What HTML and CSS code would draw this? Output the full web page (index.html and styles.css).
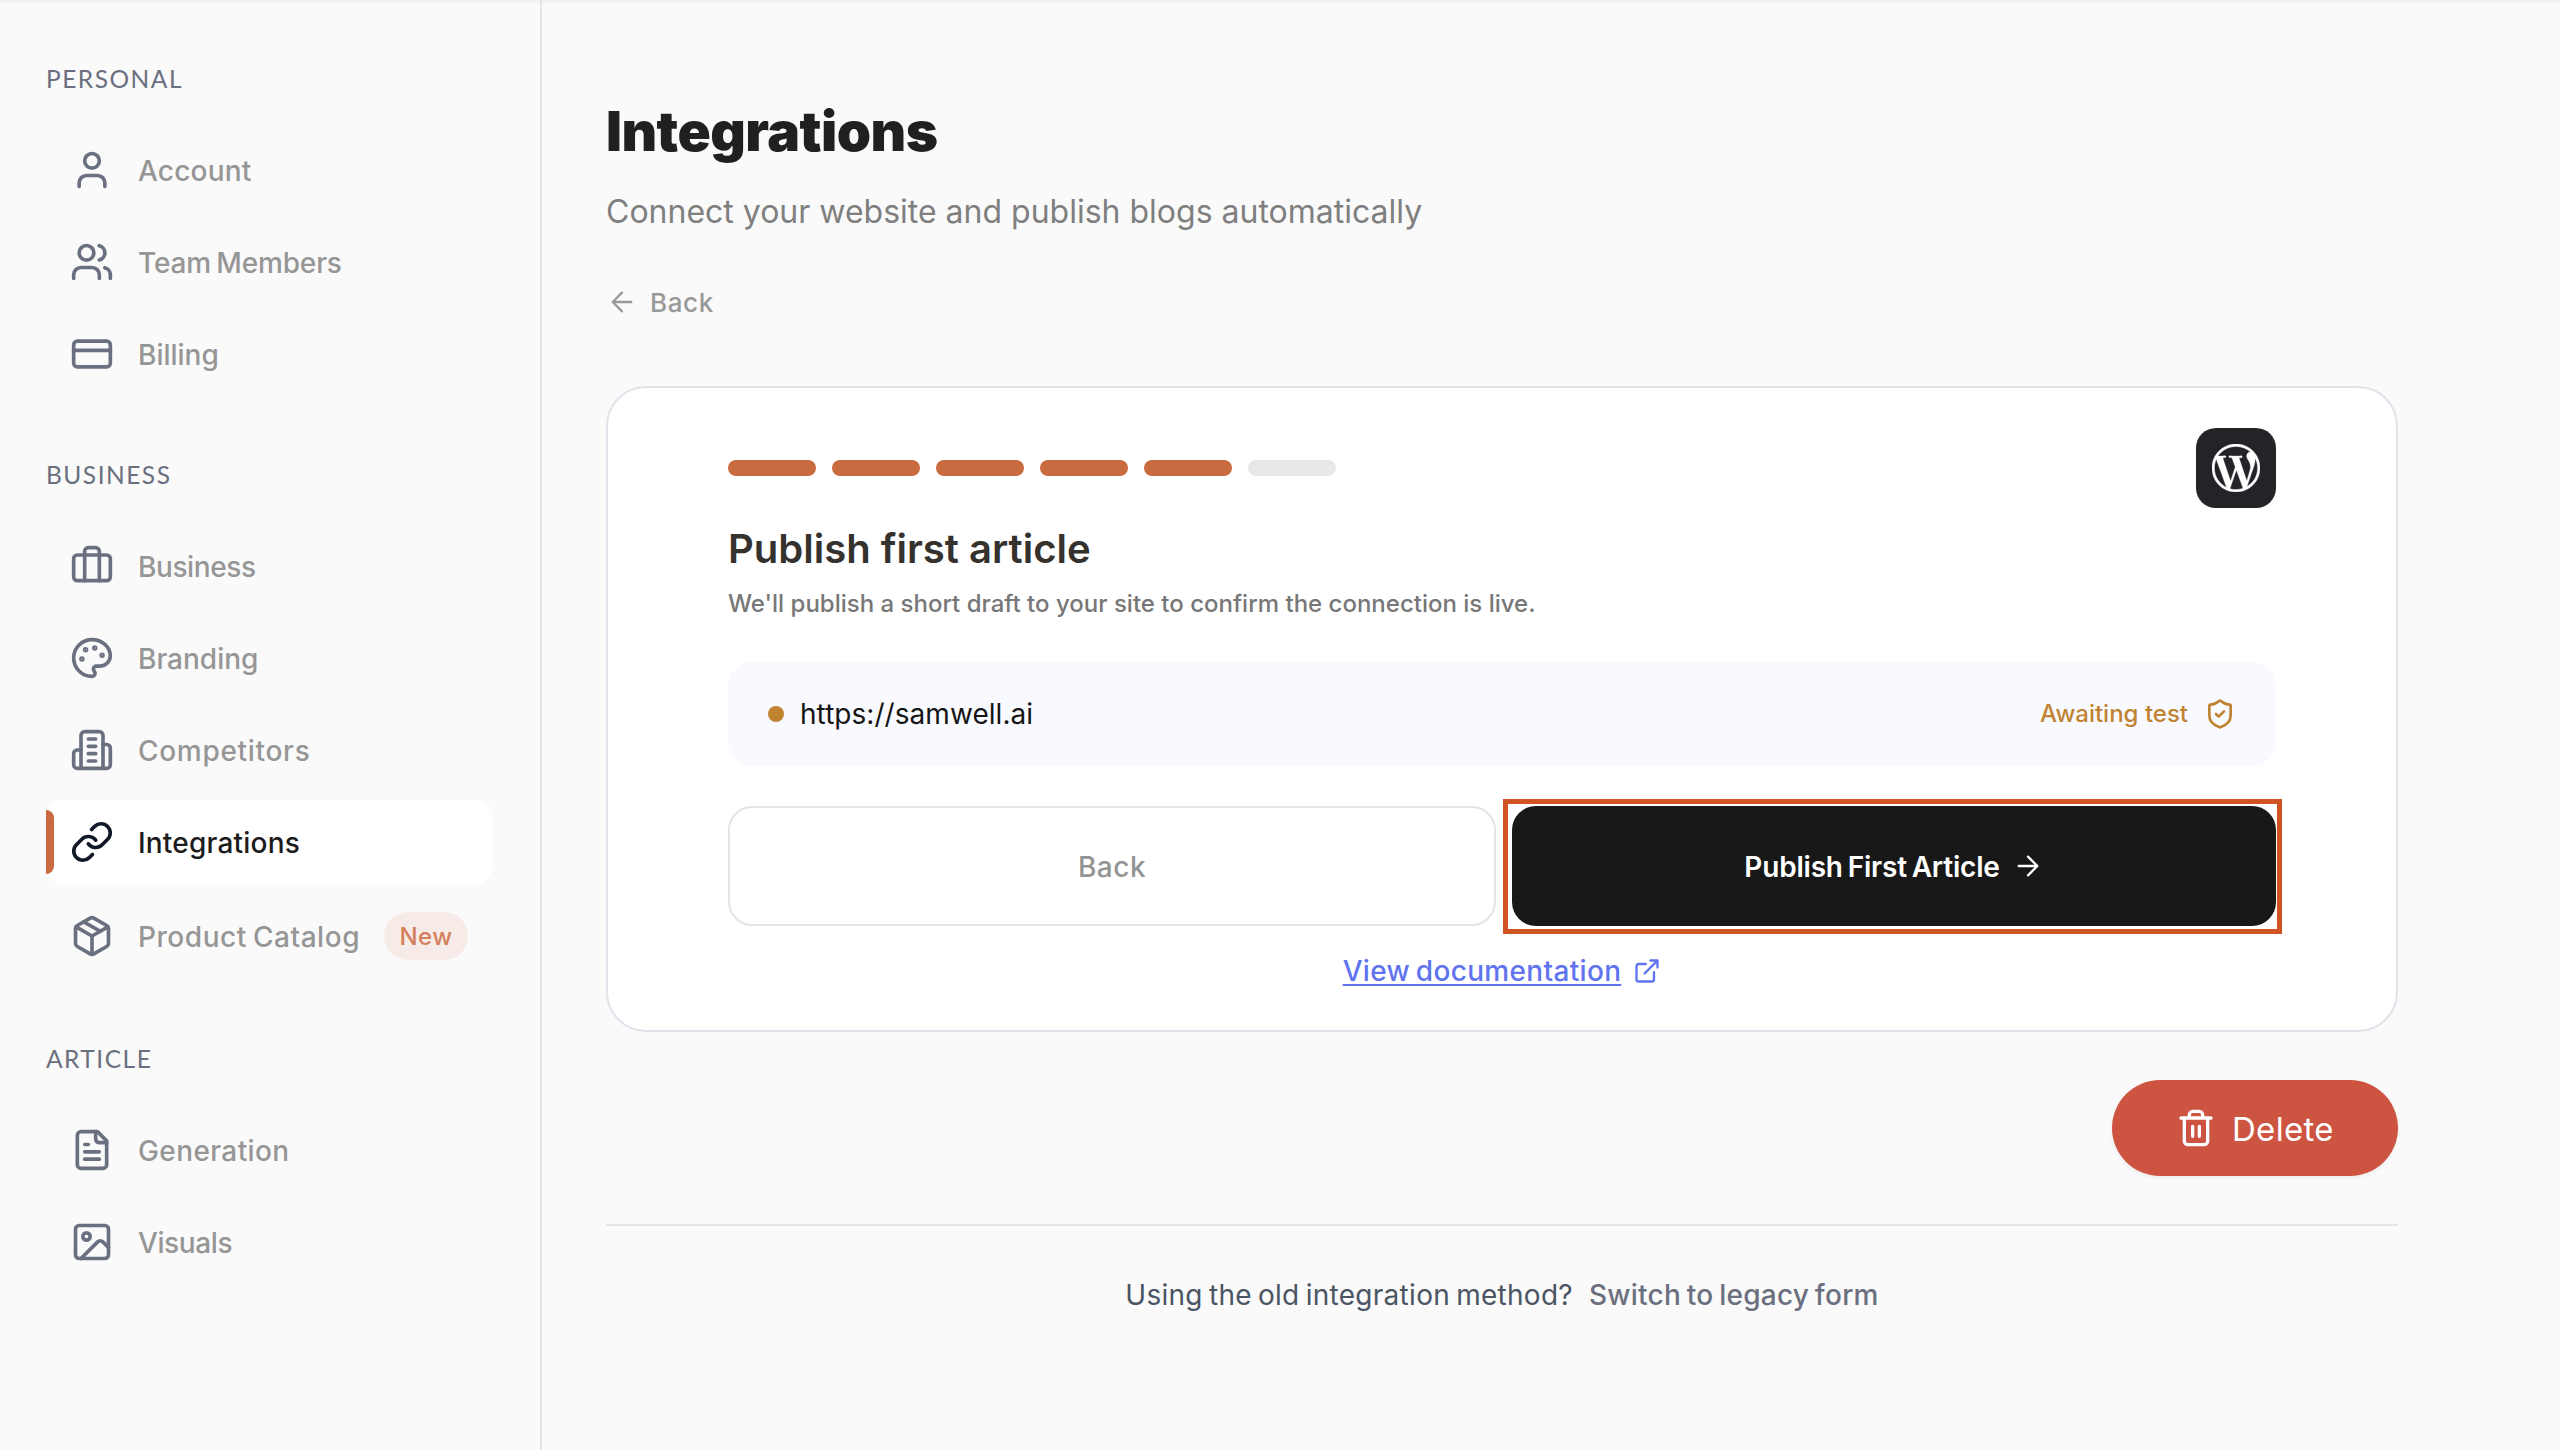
FILE: index.html
```
<!DOCTYPE html>
<html lang="en">
<head>
<meta charset="utf-8">
<title>Integrations</title>
<link rel="stylesheet" href="styles.css">
</head>
<body>
<div class="app">
  <aside class="sidebar">
    <nav class="nav-group">
      <h2 class="nav-heading">PERSONAL</h2>
      <a class="nav-item"><svg class="icon" viewBox="0 0 24 24"><path d="M19 21v-2a4 4 0 0 0-4-4H9a4 4 0 0 0-4 4v2"/><circle cx="12" cy="7" r="4"/></svg><span class="label">Account</span></a>
      <a class="nav-item team"><svg class="icon" viewBox="0 0 24 24"><path d="M16 21v-2a4 4 0 0 0-4-4H6a4 4 0 0 0-4 4v2"/><circle cx="9" cy="7" r="4"/><path d="M22 21v-2a4 4 0 0 0-3-3.87"/><path d="M16 3.13a4 4 0 0 1 0 7.75"/></svg><span class="label">Team Members</span></a>
      <a class="nav-item snug"><svg class="icon" viewBox="0 0 24 24"><rect x="2" y="5" width="20" height="14" rx="2"/><path d="M2 10h20"/></svg><span class="label">Billing</span></a>
    </nav>
    <nav class="nav-group">
      <h2 class="nav-heading">BUSINESS</h2>
      <a class="nav-item tight"><svg class="icon" viewBox="0 0 24 24"><path d="M16 20V4a2 2 0 0 0-2-2h-4a2 2 0 0 0-2 2v16"/><rect x="2" y="6" width="20" height="14" rx="2"/></svg><span class="label">Business</span></a>
      <a class="nav-item snug"><svg class="icon" viewBox="0 0 24 24"><g fill="currentColor"><circle cx="13.5" cy="6.5" r=".5"/><circle cx="17.5" cy="10.5" r=".5"/><circle cx="8.5" cy="7.5" r=".5"/><circle cx="6.5" cy="12.5" r=".5"/></g><path d="M12 2C6.5 2 2 6.5 2 12s4.5 10 10 10c.926 0 1.648-.746 1.648-1.688 0-.437-.18-.835-.437-1.125-.29-.289-.438-.652-.438-1.125a1.64 1.64 0 0 1 1.668-1.668h1.996c3.051 0 5.555-2.503 5.555-5.554C21.965 6.012 17.461 2 12 2z"/></svg><span class="label">Branding</span></a>
      <a class="nav-item competitors"><svg class="icon" viewBox="0 0 24 24"><path d="M6 22V4a2 2 0 0 1 2-2h8a2 2 0 0 1 2 2v18Z"/><path d="M6 12H4a2 2 0 0 0-2 2v6a2 2 0 0 0 2 2h2"/><path d="M18 9h2a2 2 0 0 1 2 2v9a2 2 0 0 1-2 2h-2"/><path d="M10 6h4M10 10h4M10 14h4M10 18h4"/></svg><span class="label">Competitors</span></a>
      <a class="nav-item active"><svg class="icon" viewBox="0 0 24 24"><path d="M10 13a5 5 0 0 0 7.54.54l3-3a5 5 0 0 0-7.07-7.07l-1.72 1.71"/><path d="M14 11a5 5 0 0 0-7.54-.54l-3 3a5 5 0 0 0 7.07 7.07l1.71-1.71"/></svg><span class="label">Integrations</span></a>
      <a class="nav-item catalog"><svg class="icon" viewBox="0 0 24 24"><path d="m7.5 4.27 9 5.15"/><path d="M21 8a2 2 0 0 0-1-1.73l-7-4a2 2 0 0 0-2 0l-7 4A2 2 0 0 0 3 8v8a2 2 0 0 0 1 1.73l7 4a2 2 0 0 0 2 0l7-4A2 2 0 0 0 21 16Z"/><path d="m3.3 7 8.7 5 8.7-5"/><path d="M12 22V12"/></svg><span class="label">Product Catalog</span><b class="badge">New</b></a>
    </nav>
    <nav class="nav-group">
      <h2 class="nav-heading">ARTICLE</h2>
      <a class="nav-item loose"><svg class="icon" viewBox="0 0 24 24"><path d="M15 2H6a2 2 0 0 0-2 2v16a2 2 0 0 0 2 2h12a2 2 0 0 0 2-2V7Z"/><path d="M14 2v4a2 2 0 0 0 2 2h4"/><path d="M10 9H8M16 13H8M16 17H8"/></svg><span class="label">Generation</span></a>
      <a class="nav-item tight"><svg class="icon" viewBox="0 0 24 24"><rect x="3" y="3" width="18" height="18" rx="2"/><circle cx="9" cy="9" r="2"/><path d="m21 15-3.086-3.086a2 2 0 0 0-2.828 0L6 21"/></svg><span class="label">Visuals</span></a>
    </nav>
  </aside>

  <main class="main">
    <h1 class="title">Integrations</h1>
    <p class="subtitle">Connect your website and publish blogs automatically</p>
    <a class="back-link"><svg class="icon arrow" viewBox="0 0 24 24"><path d="m12 19-7-7 7-7M19 12H5"/></svg>Back</a>

    <section class="card">
      <div class="card-top">
        <div class="steps">
          <i class="step done"></i><i class="step done"></i><i class="step done"></i><i class="step done"></i><i class="step done"></i><i class="step"></i>
        </div>
        <div class="platform">
          <svg class="wp" viewBox="0 0 24 24"><path fill-rule="evenodd" d="M21.469 6.825c.84 1.537 1.318 3.3 1.318 5.175 0 3.979-2.156 7.456-5.363 9.325l3.295-9.527c.615-1.54.82-2.771.82-3.864 0-.405-.026-.78-.07-1.11m-7.981.105c.647-.03 1.232-.105 1.232-.105.582-.075.514-.93-.067-.899 0 0-1.755.135-2.88.135-1.064 0-2.85-.15-2.85-.15-.585-.03-.661.855-.075.885 0 0 .54.061 1.125.09l1.68 4.605-2.37 7.08L5.354 6.9c.649-.03 1.234-.1 1.234-.1.585-.075.516-.93-.065-.896 0 0-1.746.138-2.874.138-.2 0-.438-.008-.69-.015C4.911 3.15 8.235 1.215 12 1.215c2.809 0 5.365 1.072 7.286 2.833-.046-.003-.091-.009-.141-.009-1.06 0-1.812.923-1.812 1.914 0 .89.513 1.643 1.06 2.531.411.72.89 1.643.89 2.977 0 .915-.354 1.994-.821 3.479l-1.075 3.585-3.9-11.61.001.014zM12 22.784c-1.059 0-2.081-.153-3.048-.437l3.237-9.406 3.315 9.087c.024.053.05.101.078.149-1.12.393-2.325.609-3.582.609M1.211 12c0-1.564.336-3.05.935-4.39L7.29 21.709C3.694 19.96 1.212 16.271 1.211 12M12 0C5.385 0 0 5.385 0 12s5.385 12 12 12 12-5.385 12-12S18.615 0 12 0"/></svg>
        </div>
      </div>
      <h2 class="card-title">Publish first article</h2>
      <p class="card-text">We'll publish a short draft to your site to confirm the connection is live.</p>
      <div class="site">
        <i class="dot"></i>
        <span class="site-url">https://samwell.ai</span>
        <span class="site-status">Awaiting test<svg class="icon shield" viewBox="0 0 24 24"><path d="M20 13c0 5-3.5 7.5-7.66 8.95a1 1 0 0 1-.67-.01C7.5 20.5 4 18 4 13V6a1 1 0 0 1 1-1c2 0 4.5-1.2 6.24-2.72a1.17 1.17 0 0 1 1.52 0C14.51 3.81 17 5 19 5a1 1 0 0 1 1 1z"/><path d="m9 12 2 2 4-4"/></svg></span>
      </div>
      <div class="actions">
        <button class="btn btn-back"><span class="label">Back</span></button>
        <button class="btn btn-publish"><span class="label">Publish First Article</span><svg class="icon arrow" viewBox="0 0 24 24"><path d="M5 12h14M12 5l7 7-7 7"/></svg></button>
        <i class="highlight"></i>
      </div>
      <a class="docs"><span class="docs-text">View documentation</span><svg class="icon external" viewBox="0 0 24 24"><path d="M18 13v6a2 2 0 0 1-2 2H5a2 2 0 0 1-2-2V8a2 2 0 0 1 2-2h6M15 3h6v6M10 14 21 3"/></svg></a>
    </section>

    <button class="delete"><svg class="icon trash" viewBox="0 0 24 24"><path d="M3 6h18M19 6v14c0 1-1 2-2 2H7c-1 0-2-1-2-2V6M8 6V4c0-1 1-2 2-2h4c1 0 2 1 2 2v2M10 11v6M14 11v6"/></svg><span class="label">Delete</span></button>

    <footer class="footer">
      <span class="footer-text">Using the old integration method?</span>
      <a class="footer-link">Switch to legacy form</a>
    </footer>
  </main>
</div>
</body>
</html>
```
FILE: styles.css
```
* { box-sizing: border-box; }

body {
  margin: 0;
  background: #fafafa;
  font-family: Inter, "Liberation Sans", sans-serif;
  -webkit-font-smoothing: antialiased;
}

h1, h2, p { margin: 0; }
button { border: 0; font: inherit; }

.app {
  display: flex;
  height: 1450px;
  overflow: hidden;
  background: linear-gradient(#eeeeee, #fafafa 5px);
}

.icon {
  width: 44px;
  height: 44px;
  flex: none;
  fill: none;
  stroke: currentColor;
  stroke-width: 2;
  stroke-linecap: round;
  stroke-linejoin: round;
}

.label { padding-top: 2px; }

/* Sidebar */
.sidebar {
  flex: none;
  width: 542px;
  padding: 63px 48px 0 46px;
  border-right: 2px solid #e4e5ec;
  display: flex;
  flex-direction: column;
  gap: 64px;
}

.nav-group {
  display: flex;
  flex-direction: column;
  gap: 8px;
}

.nav-group:last-child { gap: 8px; }

.nav-heading {
  height: 32px;
  margin-bottom: 25px;
  font: 400 24.5px/32px Lato, "Liberation Sans", sans-serif;
  letter-spacing: 1.5px;
  color: #6b7080;
}

.nav-group + .nav-group { margin-top: -1px; }

.nav-item {
  display: flex;
  align-items: center;
  gap: 24px;
  min-height: 84px;
  padding: 20px 24px;
  border-radius: 16px;
  font-size: 28px;
  font-weight: 500;
  line-height: 40px;
  letter-spacing: .2px;
  white-space: nowrap;
  color: #969696;
}

.nav-item .icon { color: #6b7080; }
.nav-item.snug { letter-spacing: 0; }
.nav-item.loose { letter-spacing: .4px; }
.nav-item.tight { letter-spacing: -.4px; }
.nav-item.team { letter-spacing: -.15px; word-spacing: -2px; }
.nav-item.competitors { letter-spacing: .7px; }
.nav-item.catalog { letter-spacing: .55px; word-spacing: -2px; }

.nav-item.active {
  position: relative;
  background: #ffffff;
  color: #1c1c1c;
}

.nav-item.active::before {
  content: "";
  position: absolute;
  left: 0;
  top: 10px;
  width: 8px;
  height: 64px;
  border-radius: 0 8px 8px 0;
  background: #c96b41;
}

.nav-item.active .icon { color: #111827; }

.badge {
  width: 84px;
  height: 48px;
  padding-top: 1px;
  border-radius: 24px;
  background: #f6ebe7;
  color: #d37f5c;
  font-size: 24px;
  font-weight: 500;
  line-height: 48px;
  letter-spacing: .4px;
  text-align: center;
}

.catalog { height: 88px; }

/* Main column */
.main {
  width: 1920px;
  padding: 99px 64px 0;
  display: flex;
  flex-direction: column;
}

.title {
  font-size: 55px;
  font-weight: 900;
  line-height: 64px;
  letter-spacing: -.55px;
  color: #221f20;
}

.subtitle {
  margin-top: 29px;
  font-size: 32px;
  line-height: 40px;
  color: #7f7f7f;
}

.back-link {
  display: flex;
  align-items: center;
  gap: 12px;
  height: 32px;
  margin-top: 54px;
  font-size: 26px;
  font-weight: 500;
  letter-spacing: .6px;
  color: #999999;
}

.arrow {
  width: 32px;
  height: 32px;
  stroke-width: 1.7;
}

/* Setup card */
.card {
  height: 646px;
  margin-top: 68px;
  padding: 40px 120px;
  border: 2px solid #e1e3eb;
  border-radius: 40px;
  background: #ffffff;
}

.card-top {
  display: flex;
  align-items: center;
  justify-content: space-between;
}

.steps {
  display: flex;
  gap: 16px;
}

.step {
  width: 88px;
  height: 16px;
  border-radius: 8px;
  background: #e8e8e8;
}

.step.done { background: #c96b41; }

.platform {
  width: 80px;
  height: 80px;
  border-radius: 20px;
  background: #222428;
  display: grid;
  place-items: center;
}

.wp {
  width: 48px;
  height: 48px;
  fill: #ffffff;
  stroke: #ffffff;
  stroke-width: .2;
}

.card-title {
  margin-top: 17px;
  font-size: 40px;
  font-weight: 600;
  line-height: 48px;
  color: #35312d;
}

.card-text {
  margin-top: 13px;
  font-size: 24px;
  font-weight: 500;
  line-height: 36px;
  color: #777777;
}

.site {
  display: flex;
  align-items: center;
  gap: 16px;
  height: 104px;
  margin-top: 40px;
  padding: 0 40px;
  border-radius: 24px;
  background: #f9faff;
}

.dot {
  width: 16px;
  height: 16px;
  border-radius: 50%;
  background: #bf8331;
}

.site-url {
  font-size: 28px;
  letter-spacing: .05px;
  color: #151515;
}

.site-status {
  display: flex;
  align-items: center;
  gap: 16px;
  margin-left: auto;
  font-size: 24px;
  font-weight: 500;
  line-height: 30px;
  color: #bf8331;
}

.shield {
  width: 32px;
  height: 32px;
}

.actions {
  position: relative;
  display: flex;
  gap: 16px;
  margin-top: 40px;
}

.btn {
  display: flex;
  align-items: center;
  justify-content: center;
  gap: 12px;
  height: 120px;
  border-radius: 24px;
  font-size: 28px;
}

.btn-back {
  width: 768px;
  border: 2px solid #e4e4e4;
  background: #ffffff;
  font-weight: 500;
  letter-spacing: .5px;
  color: #949494;
}

.btn-publish {
  width: 764px;
  background: #181818;
  font-weight: 600;
  letter-spacing: -.2px;
  word-spacing: -2px;
  color: #ffffff;
}

.highlight {
  position: absolute;
  left: 775px;
  top: -7px;
  width: 779px;
  height: 135px;
  border: 5px solid #d05324;
}

.docs {
  display: flex;
  align-items: center;
  justify-content: center;
  gap: 12px;
  height: 40px;
  margin-top: 25px;
  font-size: 28px;
  font-weight: 500;
  letter-spacing: .32px;
  word-spacing: -2px;
  color: #5f74ee;
}

.docs-text {
  text-decoration: underline;
  text-decoration-thickness: 2px;
  text-underline-offset: 3px;
  text-decoration-skip-ink: none;
}

.external {
  width: 28px;
  height: 28px;
}

.delete {
  align-self: flex-end;
  display: flex;
  align-items: center;
  gap: 16px;
  width: 286px;
  height: 96px;
  margin-top: 48px;
  padding: 0 0 0 64px;
  border-radius: 48px;
  background: #cd5440;
  box-shadow: 0 2px 4px rgba(0, 0, 0, .06);
  font-size: 33px;
  letter-spacing: .3px;
  color: #ffffff;
}

.trash {
  width: 40px;
  height: 40px;
}

.footer {
  display: flex;
  justify-content: center;
  gap: 16px;
  margin-top: 48px;
  padding-top: 49px;
  border-top: 2px solid #e4e4ea;
  font-size: 28px;
  line-height: 40px;
}

.footer-text {
  letter-spacing: .28px;
  word-spacing: -2px;
  color: #4b5563;
}

.footer-link {
  font-weight: 500;
  letter-spacing: .25px;
  word-spacing: -2px;
  color: #6b7080;
}
```
